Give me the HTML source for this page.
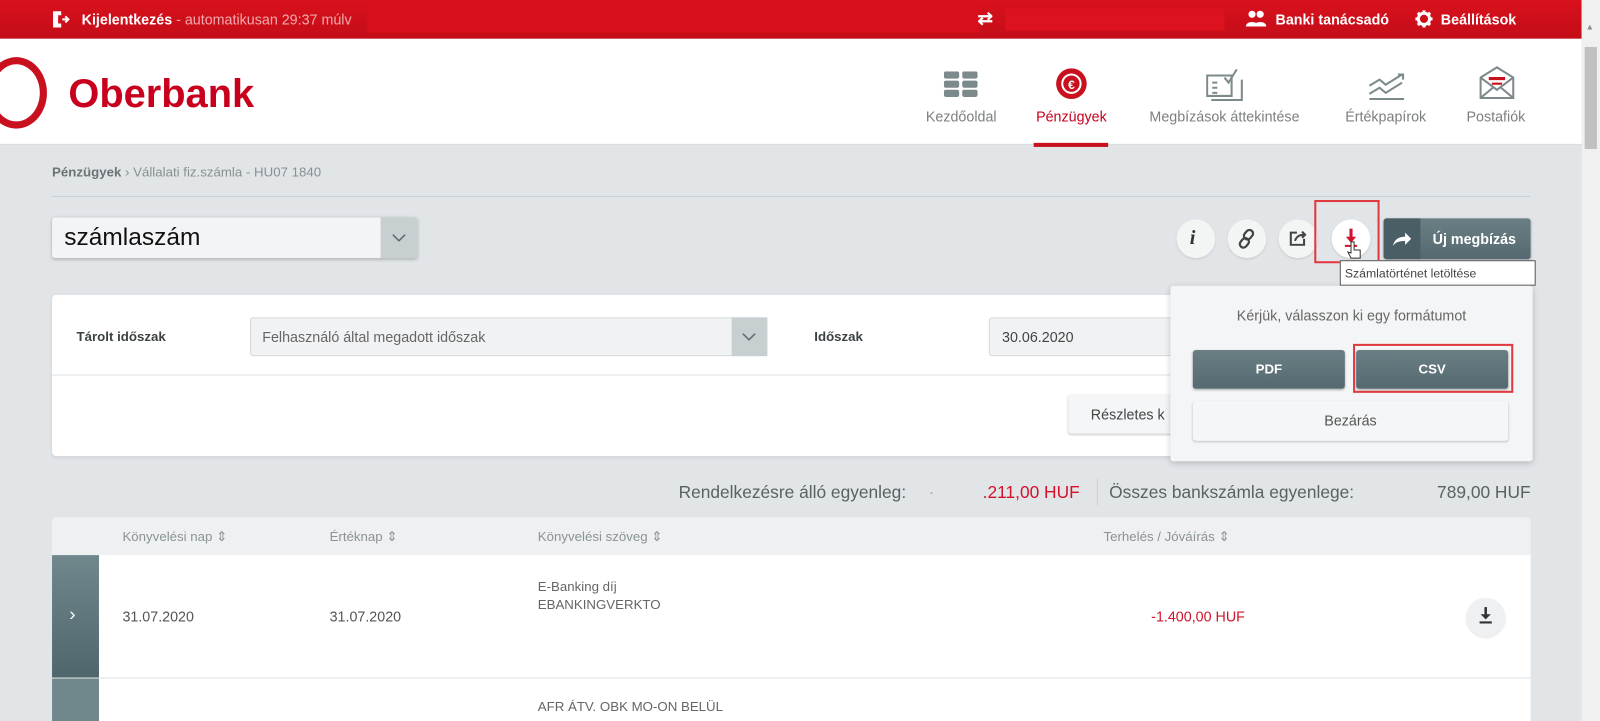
<!DOCTYPE html>
<html><head><meta charset="utf-8"><style>
*{box-sizing:border-box;margin:0;padding:0}
html,body{width:1600px;height:721px;overflow:hidden;background:#e1e5e8;font-family:"Liberation Sans",sans-serif}
#w{position:absolute;left:0;top:0;width:1568px;height:707px;transform:scale(1.0204);transform-origin:0 0;background:#e1e5e8}
.a{position:absolute}
.t{position:absolute;white-space:nowrap}
.top{left:0;top:0;width:1550px;height:38px;background:linear-gradient(#d9111c,#c30d18)}
.nav{color:#7c7f80;font-size:14px;text-align:center}
.rb{position:absolute;width:38px;height:38px;border-radius:50%;background:#f3f4f4;box-shadow:0 1px 2px rgba(0,0,0,.12)}
.btn{position:absolute;background:linear-gradient(#6a7f84,#556a70);color:#fff;font-weight:bold;font-size:13px;text-align:center;border-radius:3px;box-shadow:0 1px 2px rgba(0,0,0,.3)}
.lb{position:absolute;background:#f5f6f7;color:#555;font-size:13px;text-align:center;border-radius:3px;box-shadow:0 1px 2px rgba(0,0,0,.2)}
.hd{color:#8a9396;font-size:13px}
.red{color:#d3112a}
</style></head><body><div id="w">
<div class="a top"></div>
<div class="a" style="left:360px;top:6px;width:600px;height:26px;background:#d8101c"></div>
<div class="a" style="left:985px;top:8px;width:215px;height:22px;background:#dc131f"></div>
<svg class="a" style="left:51px;top:10px" width="18" height="18" viewBox="0 0 18 18"><path d="M1 1h8v4H6v8h3v4H1z" fill="#fff"/><path d="M10 9h6M13 6l3 3-3 3" stroke="#fff" stroke-width="2" fill="none"/></svg>
<div class="t" style="left:80px;top:11px;font-size:14px;color:#fff;font-weight:bold">Kijelentkezés <span style="font-weight:normal;color:#f2a9ae">- automatikusan 29:37 múlv</span></div>
<div class="t" style="left:958px;top:8px;font-size:18px;color:#fff;font-weight:bold">⇄</div>
<svg class="a" style="left:1220px;top:10px" width="22" height="16" viewBox="0 0 22 16"><circle cx="7" cy="4" r="3.5" fill="#fff"/><circle cx="15" cy="4" r="3.5" fill="#fff"/><path d="M1 16c0-6 12-6 12 0zM9 16c0-6 12-6 12 0z" fill="#fff"/></svg>
<div class="t" style="left:1250px;top:11px;font-size:14px;color:#fff;font-weight:bold">Banki tanácsadó</div>
<svg class="a" style="left:1387px;top:10px" width="17" height="17" viewBox="0 0 17 17"><circle cx="8.5" cy="8.5" r="5.5" fill="none" stroke="#fff" stroke-width="3"/><g stroke="#fff" stroke-width="3"><path d="M8.5 0v4M8.5 13v4M0 8.5h4M13 8.5h4M2.5 2.5l2.5 2.5M12 12l2.5 2.5M2.5 14.5l2.5-2.5M12 5l2.5-2.5"/></g></svg>
<div class="t" style="left:1412px;top:11px;font-size:14px;color:#fff;font-weight:bold">Beállítások</div>
<!-- header -->
<div class="a" style="left:0;top:38px;width:1550px;height:104px;background:#fff;border-bottom:1px solid #d8dcde"></div>
<div class="a" style="left:-14px;top:56px;width:60px;height:70px;border-radius:50%;border:7px solid #c8101e"></div>
<div class="t" style="left:67px;top:71px;font-size:39px;font-weight:bold;color:#c8001e">Oberbank</div>
<svg class="a" style="left:925px;top:70px" width="34" height="26"><g fill="#7d8a8c"><rect x="0" y="0" width="15" height="7" rx="2"/><rect x="18" y="0" width="15" height="7" rx="2"/><rect x="0" y="9" width="15" height="7" rx="2"/><rect x="18" y="9" width="15" height="7" rx="2"/><rect x="0" y="18" width="15" height="7" rx="2"/><rect x="18" y="18" width="15" height="7" rx="2"/></g></svg>
<div class="t nav" style="left:902px;top:106px;width:80px">Kezdőoldal</div>
<svg class="a" style="left:1034px;top:66px" width="32" height="32"><circle cx="16" cy="16" r="15" fill="#c8101e"/><circle cx="16" cy="16" r="10" fill="#fff"/><circle cx="16" cy="16" r="8" fill="#c8101e"/><text x="16" y="21" font-size="12" fill="#fff" text-anchor="middle" font-family="Liberation Sans" font-weight="bold">€</text></svg>
<div class="t nav" style="left:1000px;top:106px;width:100px;color:#c8001e">Pénzügyek</div>
<div class="a" style="left:1013px;top:140px;width:73px;height:4px;background:#c8101e"></div>
<svg class="a" style="left:1182px;top:66px" width="40" height="34" fill="none" stroke="#7d8a8c" stroke-width="2"><path d="M1 8h24v20H1z"/><path d="M5 32h30V12"/><path d="M6 15h5M6 20h5M6 25h5"/><path d="M18 10l4 5 8-13"/></svg>
<div class="t nav" style="left:1110px;top:106px;width:180px">Megbízások áttekintése</div>
<svg class="a" style="left:1340px;top:70px" width="38" height="28" fill="none" stroke="#7d8a8c" stroke-width="2"><path d="M2 14l10-6 6 5 16-10M30 3h5v5"/><path d="M2 22l10-6 6 5 16-10"/><path d="M2 27h34"/></svg>
<div class="t nav" style="left:1308px;top:106px;width:100px">Értékpapírok</div>
<svg class="a" style="left:1449px;top:64px" width="36" height="34" fill="none" stroke="#7d8a8c" stroke-width="2"><path d="M2 12L18 2l16 10v20H2z"/><path d="M2 12l16 12 16-12"/><path d="M2 32l12-10M34 32L22 22"/><path d="M10 13h16" stroke="#c8101e" stroke-width="3"/><path d="M13 18h10" stroke="#c8101e" stroke-width="2"/></svg>
<div class="t nav" style="left:1416px;top:106px;width:100px">Postafiók</div>
<!-- scrollbar -->
<div class="a" style="left:1550px;top:0;width:18px;height:707px;background:#f0f0f0"></div>
<div class="a" style="left:1553px;top:46px;width:12px;height:100px;background:#c1c1c1"></div>
<div class="t" style="left:1554px;top:22px;font-size:8px;color:#888">▲</div>
<!-- breadcrumb -->
<div class="t" style="left:51px;top:161px;font-size:13px;color:#8a8f91"><b style="color:#6d7375">Pénzügyek</b> › Vállalati fiz.számla - HU07 1840</div>
<div class="a" style="left:51px;top:192px;width:1449px;height:1px;background:#c9cfd2"></div>
<div class="a" style="left:51px;top:213px;width:358px;height:40px;background:#f3f4f5;border-radius:3px;box-shadow:0 1px 3px rgba(0,0,0,.25)"></div>
<div class="t" style="left:63px;top:219px;font-size:24px;color:#111">számlaszám</div>
<div class="a" style="left:373px;top:213px;width:36px;height:40px;background:#c8cfd1;border-radius:0 3px 3px 0"></div>
<svg class="a" style="left:383px;top:228px" width="16" height="10"><path d="M2 2l6 6 6-6" stroke="#5e6b6e" stroke-width="1.5" fill="none"/></svg>
<!-- round buttons -->
<div class="rb" style="left:1153px;top:215px"></div><div class="t" style="left:1166px;top:222px;font:bold italic 20px 'Liberation Serif',serif;color:#333">i</div>
<div class="rb" style="left:1203px;top:215px"></div>
<svg class="a" style="left:1212px;top:224px" width="20" height="20" fill="none" stroke="#444" stroke-width="2.2"><rect x="8" y="1" width="7" height="10" rx="3.5" transform="rotate(40 11.5 6)"/><rect x="4" y="9" width="7" height="10" rx="3.5" transform="rotate(40 7.5 14)"/></svg>
<div class="rb" style="left:1253px;top:215px"></div>
<svg class="a" style="left:1263px;top:225px" width="18" height="16" fill="none" stroke="#444" stroke-width="2"><path d="M8 3H2v12h13V9"/><path d="M6 11c2-5 5-6 10-6M13 2l3 3-3 3"/></svg>
<div class="rb" style="left:1305px;top:215px;background:#fff"></div>
<svg class="a" style="left:1316px;top:222px" width="16" height="22"><path d="M8 2v10" stroke="#d3112a" stroke-width="3"/><path d="M3 10l5 6 5-6z" fill="#d3112a"/><path d="M2 19h12" stroke="#d3112a" stroke-width="2"/></svg>
<svg class="a" style="left:1320px;top:236px" width="16" height="20"><path d="M4 1h3v8h6v8H4l-3-6 3 1z" fill="#fff" stroke="#333" stroke-width="1"/></svg>
<div class="a" style="left:1288px;top:196px;width:64px;height:62px;border:2px solid #e0393f"></div>
<div class="btn" style="left:1356px;top:214px;width:144px;height:40px;line-height:40px;text-align:left;padding-left:48px;font-size:14px">Új megbízás</div>
<div class="a" style="left:1356px;top:214px;width:36px;height:40px;background:#4a5f65;border-radius:3px 0 0 3px"></div>
<svg class="a" style="left:1364px;top:226px" width="20" height="16"><path d="M1 15c2-7 6-9 12-9V2l6 6-6 6V10c-5 0-9 1-12 5z" fill="#fff"/></svg>
<!-- filter card -->
<div class="a" style="left:51px;top:289px;width:1449px;height:158px;background:#fff;border-radius:4px;box-shadow:0 1px 3px rgba(0,0,0,.1)"></div>
<div class="a" style="left:51px;top:367px;width:1449px;height:1px;background:#dde1e3"></div>
<div class="t" style="left:75px;top:322px;font-size:13px;font-weight:bold;color:#3c4244">Tárolt időszak</div>
<div class="a" style="left:245px;top:311px;width:507px;height:38px;background:#f1f2f3;border:1px solid #d5d9db;border-radius:3px"></div>
<div class="t" style="left:257px;top:322px;font-size:14px;color:#666">Felhasználó által megadott időszak</div>
<div class="a" style="left:717px;top:311px;width:35px;height:38px;background:#c8cfd1"></div>
<svg class="a" style="left:726px;top:325px" width="16" height="10"><path d="M2 2l6 6 6-6" stroke="#5e6b6e" stroke-width="1.5" fill="none"/></svg>
<div class="t" style="left:798px;top:322px;font-size:13px;font-weight:bold;color:#3c4244">Időszak</div>
<div class="a" style="left:969px;top:311px;width:190px;height:38px;background:#f1f2f3;border:1px solid #d5d9db;border-radius:3px"></div>
<div class="t" style="left:982px;top:322px;font-size:14px;color:#444">30.06.2020</div>
<div class="lb" style="left:1047px;top:387px;width:110px;height:38px;line-height:38px;text-align:left;padding-left:22px;font-size:14px;color:#444">Részletes k</div>
<!-- tooltip -->
<div class="t" style="left:1313px;top:255px;width:192px;height:25px;background:#fff;border:1px solid #555;font-size:12px;color:#444;padding:5px 0 0 4px">Számlatörténet letöltése</div>
<!-- popover -->
<div class="a" style="left:1147px;top:280px;width:355px;height:172px;background:#f4f5f6;box-shadow:0 2px 6px rgba(0,0,0,.18);border-radius:3px"></div>
<div class="t" style="left:1147px;top:301px;width:355px;text-align:center;font-size:14px;color:#666">Kérjük, válasszon ki egy formátumot</div>
<div class="btn" style="left:1169px;top:343px;width:149px;height:38px;line-height:38px">PDF</div>
<div class="btn" style="left:1329px;top:343px;width:149px;height:38px;line-height:38px">CSV</div>
<div class="a" style="left:1326px;top:337px;width:157px;height:48px;border:2px solid #e0393f"></div>
<div class="lb" style="left:1169px;top:393px;width:309px;height:39px;line-height:39px;font-size:14px">Bezárás</div>
<!-- balances -->
<div class="t" style="left:665px;top:473px;font-size:17px;color:#5b6163">Rendelkezésre álló egyenleg:</div>
<div class="t" style="left:910px;top:473px;font-size:17px;color:#aaa">·</div>
<div class="t red" style="left:963px;top:473px;font-size:17px">.211,00 HUF</div>
<div class="a" style="left:1075px;top:469px;width:1px;height:26px;background:#c9cfd2"></div>
<div class="t" style="left:1087px;top:473px;font-size:17px;color:#5b6163">Összes bankszámla egyenlege:</div>
<div class="t" style="left:1300px;width:200px;text-align:right;top:473px;font-size:17px;color:#5b6163">789,00 HUF</div>
<!-- table -->
<div class="a" style="left:51px;top:507px;width:1449px;height:200px;background:#fff;border-radius:4px 4px 0 0"></div>
<div class="a" style="left:51px;top:507px;width:1449px;height:37px;background:#eef0f1;border-radius:4px 4px 0 0"></div>
<div class="t hd" style="left:120px;top:518px">Könyvelési nap ⇕</div>
<div class="t hd" style="left:323px;top:518px">Értéknap ⇕</div>
<div class="t hd" style="left:527px;top:518px">Könyvelési szöveg ⇕</div>
<div class="t hd" style="left:1005px;width:200px;text-align:right;top:518px">Terhelés / Jóváírás ⇕</div>
<div class="a" style="left:51px;top:544px;width:46px;height:120px;background:linear-gradient(#70878c,#4f666c)"></div>
<div class="t" style="left:68px;top:592px;font-size:18px;color:#fff">›</div>
<div class="t" style="left:120px;top:596px;font-size:14px;color:#555">31.07.2020</div>
<div class="t" style="left:323px;top:596px;font-size:14px;color:#555">31.07.2020</div>
<div class="t" style="left:527px;top:567px;font-size:13px;color:#666">E-Banking díj</div>
<div class="t" style="left:527px;top:585px;font-size:13px;color:#666">EBANKINGVERKTO</div>
<div class="t red" style="left:1020px;width:200px;text-align:right;top:596px;font-size:14px">-1.400,00 HUF</div>
<div class="rb" style="left:1437px;top:586px;background:#eef0f1"></div>
<svg class="a" style="left:1449px;top:594px" width="14" height="20"><path d="M7 1v8" stroke="#333" stroke-width="2.5"/><path d="M2 8l5 5 5-5z" fill="#333"/><path d="M1 16h12" stroke="#333" stroke-width="2"/></svg>
<div class="a" style="left:51px;top:664px;width:1449px;height:1px;background:#dde1e3"></div>
<div class="a" style="left:51px;top:665px;width:46px;height:42px;background:#70878c"></div>
<div class="t" style="left:527px;top:685px;font-size:13px;color:#666">AFR ÁTV. OBK MO-ON BELÜL</div>
</div></body></html>
